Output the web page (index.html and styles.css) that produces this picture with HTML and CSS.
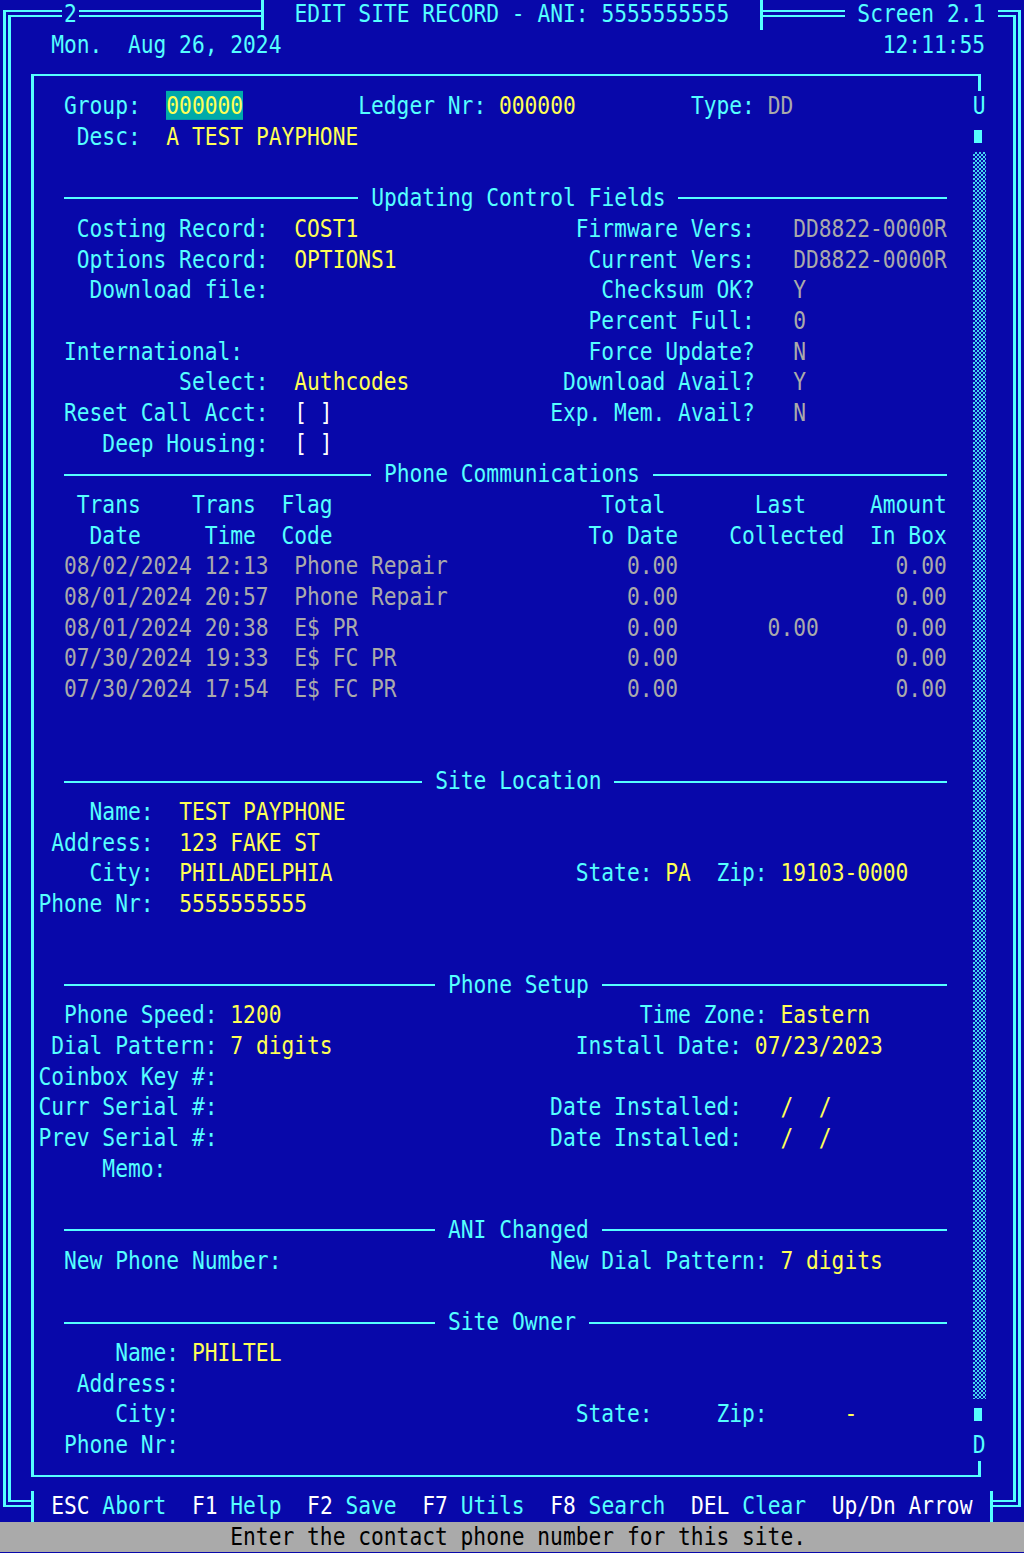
FILE: index.html
```html
<!DOCTYPE html>
<html>
<head>
<meta charset="utf-8">
<title>Edit Site Record</title>
<link rel="stylesheet" href="styles.css">
</head>
<body>
<div class="screen">
  <div class="frame">
    <div class="topbar"><span class="mask num"><span class="tx">2</span></span><span class="tab title"><span class="tx">EDIT SITE RECORD - ANI: 5555555555</span></span><span class="mask scr"><span class="tx">Screen 2.1</span></span></div>
    <div class="r">    Mon.  Aug 26, 2024                                               12:11:55</div>
    <div class="inner">
      <div class="body">
        <div class="r">     Group:  <span class="hl">000000</span>         Ledger Nr: <span class="y">000000</span>         Type: <span class="g">DD</span></div>
        <div class="r">      Desc:  <span class="y">A TEST PAYPHONE</span></div>
        <div class="r"></div>
        <div class="dv"><span class="ln w23"></span><span class="tt">Updating Control Fields</span><span class="ln rest"></span></div>
        <div class="r">      Costing Record:  <span class="y">COST1</span>                 Firmware Vers:   <span class="g">DD8822-0000R</span></div>
        <div class="r">      Options Record:  <span class="y">OPTIONS1</span>               Current Vers:   <span class="g">DD8822-0000R</span></div>
        <div class="r">       Download file:                          Checksum OK?   <span class="g">Y</span></div>
        <div class="r">                                              Percent Full:   <span class="g">0</span></div>
        <div class="r">     International:                           Force Update?   <span class="g">N</span></div>
        <div class="r">              Select:  <span class="y">Authcodes</span>            Download Avail?   <span class="g">Y</span></div>
        <div class="r">     Reset Call Acct:  <span class="w">[ ]</span>                 Exp. Mem. Avail?   <span class="g">N</span></div>
        <div class="r">        Deep Housing:  <span class="w">[ ]</span></div>
        <div class="dv"><span class="ln w24"></span><span class="tt">Phone Communications</span><span class="ln rest"></span></div>
        <div class="r">      Trans    Trans  Flag                     Total       Last     Amount</div>
        <div class="r">       Date     Time  Code                    To Date    Collected  In Box</div>
        <div class="r g">     08/02/2024 12:13  Phone Repair              0.00                 0.00</div>
        <div class="r g">     08/01/2024 20:57  Phone Repair              0.00                 0.00</div>
        <div class="r g">     08/01/2024 20:38  E$ PR                     0.00       0.00      0.00</div>
        <div class="r g">     07/30/2024 19:33  E$ FC PR                  0.00                 0.00</div>
        <div class="r g">     07/30/2024 17:54  E$ FC PR                  0.00                 0.00</div>
        <div class="r"></div>
        <div class="r"></div>
        <div class="dv"><span class="ln w28"></span><span class="tt">Site Location</span><span class="ln rest"></span></div>
        <div class="r">       Name:  <span class="y">TEST PAYPHONE</span></div>
        <div class="r">    Address:  <span class="y">123 FAKE ST</span></div>
        <div class="r">       City:  <span class="y">PHILADELPHIA</span>                   State: <span class="y">PA</span>  Zip: <span class="y">19103-0000</span></div>
        <div class="r">   Phone Nr:  <span class="y">5555555555</span></div>
        <div class="gap"></div>
        <div class="dv"><span class="ln w29"></span><span class="tt">Phone Setup</span><span class="ln rest"></span></div>
        <div class="r">     Phone Speed: <span class="y">1200</span>                            Time Zone: <span class="y">Eastern</span></div>
        <div class="r">    Dial Pattern: <span class="y">7 digits</span>                   Install Date: <span class="y">07/23/2023</span></div>
        <div class="r">   Coinbox Key #:</div>
        <div class="r">   Curr Serial #:                          Date Installed:   <span class="y">/  /</span></div>
        <div class="r">   Prev Serial #:                          Date Installed:   <span class="y">/  /</span></div>
        <div class="r">        Memo:</div>
        <div class="r"></div>
        <div class="dv"><span class="ln w29"></span><span class="tt">ANI Changed</span><span class="ln rest"></span></div>
        <div class="r">     New Phone Number:                     New Dial Pattern: <span class="y">7 digits</span></div>
        <div class="r"></div>
        <div class="dv"><span class="ln w29"></span><span class="tt">Site Owner</span><span class="ln rest"></span></div>
        <div class="r">         Name: <span class="y">PHILTEL</span></div>
        <div class="r">      Address:</div>
        <div class="r">         City:                               State:     Zip:      <span class="y">-</span></div>
        <div class="r">     Phone Nr:</div>
      </div>
      <div class="sbar">
        <div class="r sb-l">U</div>
        <div class="sb-cell"><span class="sb-blk"></span></div>
        <div class="sb-track"></div>
        <div class="sb-cell"><span class="sb-blk"></span></div>
        <div class="r sb-l">D</div>
      </div>
    </div>
    <div class="botbar"><span class="tab keys"><span class="tx"><span class="w">ESC</span> Abort  <span class="w">F1</span> Help  <span class="w">F2</span> Save  <span class="w">F7</span> Utils  <span class="w">F8</span> Search  <span class="w">DEL</span> Clear  <span class="w">Up/Dn Arrow</span></span></span></div>
  </div>
  <div class="status"><div class="r">                  Enter the contact phone number for this site.</div></div>
</div>
</body>
</html>
```

FILE: styles.css
```css
html, body {
  margin: 0;
  padding: 0;
  background: #0808aa;
  overflow: hidden;
}

body {
  width: 1024px;
  height: 1553px;
  font-family: "DejaVu Sans Mono", "Liberation Mono", monospace;
  font-size: 21.26px;
  line-height: 30.7px;
  color: #55ffff;
}

.screen {
  width: 1024px;
  height: 1553px;
  box-sizing: border-box;
  padding-top: 10px;
  background: #0808aa;
}

.frame {
  margin-left: 3px;
  width: 1018px;
  box-sizing: border-box;
  border-style: double;
  border-color: #55ffff;
  border-width: 7px 8px;
}

/* title line over the top border */
.topbar {
  display: flex;
  height: 30.7px;
  margin: -18px -11px 0 -11px;
}

.mask {
  background: #0808aa;
  white-space: pre;
}

.num {
  margin-left: 62px;
  padding: 0 2px;
}

.scr {
  margin-left: 81.8px;
  padding: 0 12.8px;
}

.tab {
  background: #0808aa;
  border-left: 3px solid #55ffff;
  border-right: 3px solid #55ffff;
  white-space: pre;
}

.title {
  margin-left: 182.2px;
  padding: 0 30.4px;
}

.tx {
  display: inline-block;
  transform: scaleY(1.16);
}

/* one text row of the 80 column screen */
.r {
  height: 30.7px;
  white-space: pre;
  transform: scaleY(1.16);
}

.frame > .r {
  margin-left: -11px;
}

.inner {
  display: flex;
  margin: 14px 32.3px 0 19.5px;
  border-style: solid;
  border-color: #55ffff;
  border-width: 2px 3px;
  padding: 14.7px 0 14px;
}

.body {
  flex: 1;
  min-width: 0;
  margin-left: -33.5px;
}

.gap {
  height: 50px;
}

/* section divider lines */
.dv {
  display: flex;
  align-items: center;
  height: 30.7px;
  padding: 0 25.6px 0 64px;
}

.dv .ln {
  border-top: 2px solid #55ffff;
}

.dv .w23 { width: 294.4px; }
.dv .w24 { width: 307.2px; }
.dv .w28 { width: 358.4px; }
.dv .w29 { width: 371.2px; }

.dv .rest {
  flex: 1;
}

.dv .tt {
  padding: 0 12.8px;
  white-space: pre;
  transform: scaleY(1.16);
}

/* scroll bar column on the right edge of the inner box */
.sbar {
  width: 12.8px;
  margin-right: -7.9px;
  background: #0808aa;
  display: flex;
  flex-direction: column;
}

.sb-l {
  text-align: center;
}

.sb-cell {
  height: 30.7px;
}

.sb-blk {
  display: block;
  width: 8px;
  height: 13px;
  margin: 8.7px 0 0 1.5px;
  background: #55ffff;
}

.sb-track {
  flex: 1;
  background: repeating-conic-gradient(#45d6f0 0 25%, #0808aa 0 50%) 0 0 / 4px 4px;
}

/* key help line over the bottom border */
.botbar {
  display: flex;
  height: 30.7px;
  margin: 14.7px -11px -22.1px -11px;
}

.keys {
  margin-left: 30.5px;
  padding: 0 17.7px;
}

.status {
  margin-top: 15.1px;
  height: 30.4px;
  background: #aaaaaa;
  color: #000000;
  overflow: hidden;
}

.y { color: #ffff55; }
.g { color: #aaaaaa; }
.w { color: #ffffff; }

.hl {
  background: #00aaaa;
  color: #ffff55;
}
```
